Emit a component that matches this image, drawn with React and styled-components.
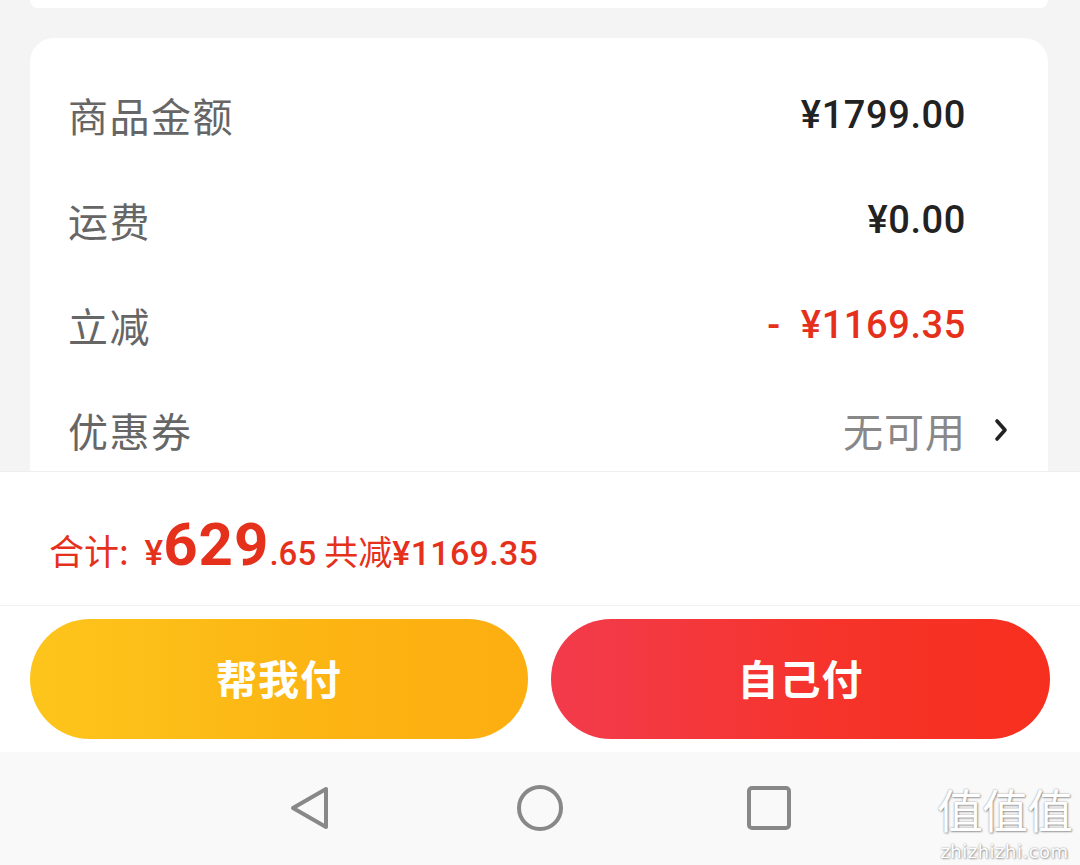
import React from "react";
import styled, { createGlobalStyle } from "styled-components";

const Global = createGlobalStyle`
  html, body { margin: 0; padding: 0; background: #f4f4f4; }
  * { box-sizing: border-box; }
`;

const Page = styled.div`
  position: relative;
  width: 1080px;
  height: 865px;
  overflow: hidden;
  display: flex;
  flex-direction: column;
  background: #f4f4f4;
  font-family: Roboto, "Noto Sans CJK SC", sans-serif;
`;

const Content = styled.div`
  flex: 1;
  min-height: 0;
  overflow: hidden;
  display: flex;
  flex-direction: column;
  gap: 30px;
  padding: 0 32px 0 30px;
`;

const CardTail = styled.div`
  height: 8px;
  flex: none;
  background: #fff;
  border-radius: 0 0 24px 24px;
`;

const Card = styled.div`
  flex: none;
  background: #fff;
  border-radius: 24px;
  padding: 24px 40px 40px 38px;
`;

const Row = styled.div`
  height: 105px;
  display: flex;
  align-items: center;
`;

const Label = styled.div`
  flex: 1;
  font-family: "Noto Sans CJK SC", sans-serif;
  font-size: 40px;
  letter-spacing: 1.5px;
  color: #666;
`;

const Value = styled.div`
  font-family: Roboto, "Noto Sans CJK SC", sans-serif;
  font-size: ${(p) => (p.$muted ? "40px" : "38px")};
  font-weight: ${(p) => (p.$muted ? 400 : 500)};
  letter-spacing: ${(p) => (p.$muted ? "1px" : "0.6px")};
  color: ${(p) => (p.$red ? "#e5301c" : p.$muted ? "#888" : "#222")};
  white-space: pre;
`;

const Trail = styled.div`
  width: 42px;
  display: flex;
  justify-content: flex-end;
  align-items: center;
`;

const Summary = styled.div`
  flex: none;
  height: 134px;
  background: #fff;
  border-top: 1px solid #eeeeee;
  display: flex;
  align-items: center;
  padding: 12px 0 0 49px;
  color: #e5301c;
`;

const Total = styled.div`
  display: flex;
  align-items: baseline;
  white-space: pre;
`;

const TotalText = styled.span`
  font-family: ${(p) => (p.$cjk ? '"Noto Sans CJK SC", sans-serif' : 'Roboto, "Noto Sans CJK SC", sans-serif')};
  font-size: ${(p) => p.$size}px;
  font-weight: ${(p) => p.$weight || 400};
  letter-spacing: ${(p) => p.$spacing || 0}px;
  margin-right: ${(p) => p.$gap || 0}px;
  line-height: 1;
`;

const Actions = styled.div`
  flex: none;
  height: 147px;
  background: #fff;
  border-top: 1px solid #f1f1f1;
  display: grid;
  grid-template-columns: 498px 499px;
  column-gap: 23px;
  padding: 13px 30px 12px;
`;

const PayButton = styled.button`
  height: 120px;
  border: none;
  border-radius: 60px;
  background: ${(p) =>
    p.$primary
      ? "linear-gradient(90deg, #f23b4c 0%, #f63329 60%, #f72f1e 100%)"
      : "linear-gradient(90deg, #fdc51c 0%, #fcb413 60%, #fdae10 100%)"};
  color: #fff;
  font-family: "Noto Sans CJK SC", sans-serif;
  font-size: 41px;
  font-weight: 700;
  letter-spacing: 1px;
  padding: 0 0 4px;
  display: flex;
  align-items: center;
  justify-content: center;
`;

const NavBar = styled.div`
  flex: none;
  height: 113px;
  background: #f9f9f9;
  display: flex;
  align-items: center;
  justify-content: center;
  gap: 181px;
  padding: 0 0 2px 0;
`;

const NavIcon = styled.svg`
  width: 48px;
  height: 48px;
  display: block;
`;

const Watermark = styled.div`
  position: absolute;
  right: 8px;
  bottom: 3px;
  display: flex;
  flex-direction: column;
  align-items: center;
  color: #fff;
  text-shadow: 0 0 2px rgba(0, 0, 0, 0.4), 1px 1px 2px rgba(0, 0, 0, 0.3);
`;

const WmMark = styled.div`
  font-family: "Noto Sans CJK SC", sans-serif;
  font-size: 46px;
  letter-spacing: -1px;
`;

const WmSite = styled.div`
  font-family: "DejaVu Sans", sans-serif;
  font-size: 18px;
  letter-spacing: 0.5px;
`;

const Chevron = () => (
  <svg width="14" height="24" viewBox="0 0 14 24">
    <path d="M3 3 L11 12 L3 21" fill="none" stroke="#222" strokeWidth="3.6" strokeLinecap="round" strokeLinejoin="round" />
  </svg>
);

const rows = [
  { label: "商品金额", value: "¥1799.00" },
  { label: "运费", value: "¥0.00" },
  { label: "立减", value: "-  ¥1169.35", red: true },
  { label: "优惠券", value: "无可用", muted: true, chevron: true },
];

export default function App() {
  return (
    <Page>
      <Global />
      <Content>
        <CardTail />
        <Card>
          {rows.map((r) => (
            <Row key={r.label}>
              <Label>{r.label}</Label>
              <Value $red={r.red} $muted={r.muted}>{r.value}</Value>
              <Trail>{r.chevron && <Chevron />}</Trail>
            </Row>
          ))}
        </Card>
      </Content>
      <Summary>
        <Total>
          <TotalText $cjk $size={35} $gap={8}>合计: </TotalText>
          <TotalText $size={35} $weight={500}>¥</TotalText>
          <TotalText $size={60} $weight={700} $spacing={1}>629</TotalText>
          <TotalText $size={33} $weight={500}>.65 </TotalText>
          <TotalText $cjk $size={34}>共减</TotalText>
          <TotalText $size={34} $weight={500} $spacing={0.3}>¥1169.35</TotalText>
        </Total>
      </Summary>
      <Actions>
        <PayButton>帮我付</PayButton>
        <PayButton $primary>自己付</PayButton>
      </Actions>
      <NavBar>
        <NavIcon viewBox="0 0 48 48">
          <path d="M39 5 L39 43 L6 24 Z" fill="none" stroke="#888" strokeWidth="4" strokeLinejoin="round" />
        </NavIcon>
        <NavIcon viewBox="0 0 48 48">
          <circle cx="24" cy="24" r="21" fill="none" stroke="#888" strokeWidth="4" />
        </NavIcon>
        <NavIcon viewBox="0 0 48 48">
          <rect x="4" y="4" width="40" height="40" rx="3" fill="none" stroke="#888" strokeWidth="4" />
        </NavIcon>
      </NavBar>
      <Watermark>
        <WmMark>值值值</WmMark>
        <WmSite>zhizhizhi.com</WmSite>
      </Watermark>
    </Page>
  );
}
